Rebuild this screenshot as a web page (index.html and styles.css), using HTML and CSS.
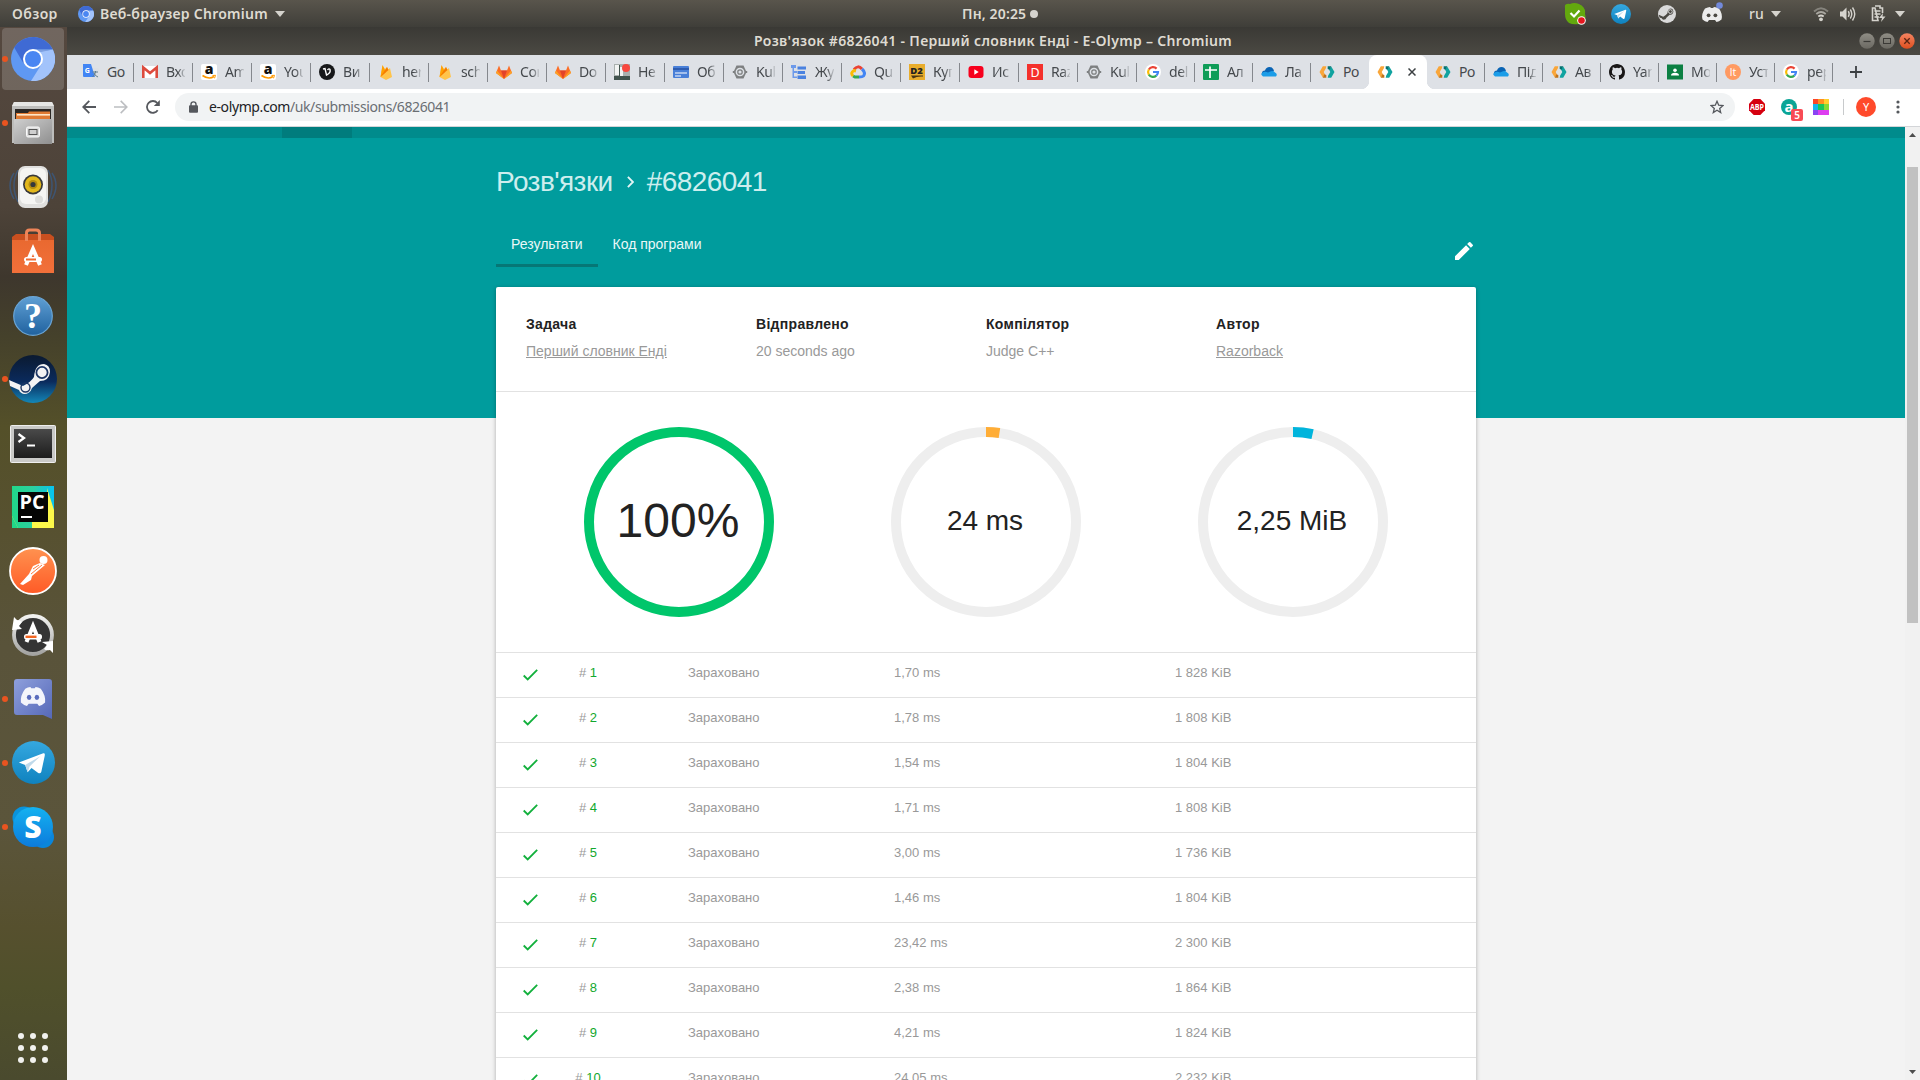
FILE: index.html
```html
<!DOCTYPE html>
<html lang="uk">
<head>
<meta charset="utf-8">
<title>Розв'язок #6826041</title>
<link rel="stylesheet" href="styles.css">
</head>
<body>
<svg class="defs" width="0" height="0" aria-hidden="true">
  <defs>
    <linearGradient id="gTele" x1="0" y1="0" x2="0" y2="1"><stop offset="0" stop-color="#35a8e0"/><stop offset="1" stop-color="#0f82bf"/></linearGradient>
    <linearGradient id="gSteam" x1="0" y1="0" x2="0" y2="1"><stop offset="0" stop-color="#0b1a30"/><stop offset=".55" stop-color="#0a2a5c"/><stop offset="1" stop-color="#1387b8"/></linearGradient>
    <linearGradient id="gPost" x1="0" y1="0" x2="0" y2="1"><stop offset="0" stop-color="#ff9250"/><stop offset="1" stop-color="#ff5a26"/></linearGradient>
    <linearGradient id="gHelp" x1="0" y1="0" x2="0" y2="1"><stop offset="0" stop-color="#5f9fd4"/><stop offset="1" stop-color="#20629f"/></linearGradient>
    <linearGradient id="gMetal" x1="0" y1="0" x2="0" y2="1"><stop offset="0" stop-color="#f2f2f0"/><stop offset="1" stop-color="#a3a3a1"/></linearGradient>
    <linearGradient id="gCab" x1="0" y1="0" x2="1" y2="1"><stop offset="0" stop-color="#cfcfcf"/><stop offset="1" stop-color="#8f8f8f"/></linearGradient>
    <linearGradient id="gBag" x1="0" y1="0" x2="0" y2="1"><stop offset="0" stop-color="#e8682f"/><stop offset="1" stop-color="#f2703a"/></linearGradient>
    <linearGradient id="gTerm" x1="0" y1="0" x2="0" y2="1"><stop offset="0" stop-color="#4a4a4a"/><stop offset="1" stop-color="#1c1c1c"/></linearGradient>
    <linearGradient id="gPc" x1="0" y1="0" x2="1" y2="0"><stop offset="0" stop-color="#21d789"/><stop offset=".5" stop-color="#2ccfa0"/><stop offset="1" stop-color="#07c3f2"/></linearGradient>
    <linearGradient id="gDisc" x1="0" y1="0" x2="1" y2="1"><stop offset="0" stop-color="#8e9fdc"/><stop offset="1" stop-color="#5568b8"/></linearGradient>
    <linearGradient id="gSkype" x1="0" y1="0" x2="0" y2="1"><stop offset="0" stop-color="#14b2f0"/><stop offset="1" stop-color="#0c7bdc"/></linearGradient>
    <linearGradient id="gClose" x1="0" y1="0" x2="0" y2="1"><stop offset="0" stop-color="#f58461"/><stop offset="1" stop-color="#df4f1f"/></linearGradient>
    <linearGradient id="gWin" x1="0" y1="0" x2="0" y2="1"><stop offset="0" stop-color="#8f8d85"/><stop offset="1" stop-color="#6b6962"/></linearGradient>

    <symbol id="chromium" viewBox="0 0 44 44">
      <circle cx="22" cy="22" r="22" fill="#5f98f3"/>
      <path d="M3.2 10.6A22 22 0 0 1 41.8 12.500H22L12.600 26.500Z" fill="#3f6ad4"/>
      <path d="M41.800 12.500A22 22 0 0 1 20 44L31 26.500L29 14.500Z" fill="#a2c3fb"/>
      <path d="M22 12.500H41.800L30 15Z" fill="#7d9fe0"/>
      <circle cx="22" cy="22" r="10" fill="#fff"/><circle cx="22" cy="22" r="8" fill="#4a86f2"/>
    </symbol>
    <symbol id="telegram" viewBox="0 0 44 44">
      <circle cx="22" cy="22" r="22" fill="url(#gTele)"/>
      <path d="M7 22L32 12.500Q34 12 33.500 15L30 31.500Q29 34 26.500 32.500L20 27.500L16 32L13.500 24.500Z" fill="#fff"/>
      <path d="M13.500 24.500L29 15.500L18 26L16 32Z" fill="#bfd9ea"/>
    </symbol>
    <symbol id="discordface" viewBox="0 0 30 22">
      <path d="M6 2Q9 .3 12 0L13 1.500H17L18 0Q21 .3 24 2Q30 10 29 18Q26 21 22 22L20 19.500H10L8 22Q4 21 1 18Q0 10 6 2Z" fill="#f4f5fb"/>
      <ellipse cx="10.500" cy="12" rx="2.600" ry="3" fill="#5a6cbd"/><ellipse cx="19.500" cy="12" rx="2.600" ry="3" fill="#5a6cbd"/>
    </symbol>
    <symbol id="olymp" viewBox="0 0 16 16">
      <path d="M3.800 2.300H7.300L6.800 4.500L4.700 8L6 10.500L3.800 13.400L.5 8Z" fill="#f9a63a"/>
      <path d="M3.800 13.400L5.400 10.200L7.300 11V13.700H4Z" fill="#c1731a"/>
      <path d="M12.200 13.700H8.700L9.200 11.500L11.300 8L10 5.500L12.200 2.600L15.500 8Z" fill="#10a3a0"/>
      <path d="M12.200 2.600L10.600 5.800L8.700 5V2.300H12Z" fill="#05716f"/>
    </symbol>
    <symbol id="amazon" viewBox="0 0 16 16">
      <rect width="16" height="16" rx="2" fill="#fff"/>
      <text x="8" y="10" text-anchor="middle" font-family="Open Sans" font-weight="800" font-size="14" fill="#111">a</text>
      <path d="M1.500 11.500Q8 16 13 12.500" stroke="#f90" stroke-width="1.600" fill="none"/><path d="M11.500 11.500L14.500 11.300L13.500 14.300" stroke="#f90" fill="none"/>
    </symbol>
    <symbol id="firebase" viewBox="0 0 16 16">
      <path d="M2.500 13L4.500 1.500L7 5L9 3L10.200 5.500L12 4L14 13L8 16Z" fill="#ffc44a"/>
      <path d="M2.500 13L4.500 1L8 8Z" fill="#ffa000"/><path d="M2.500 13L9 3L10.500 6Z" fill="#f57c00"/>
    </symbol>
    <symbol id="gitlab" viewBox="0 0 16 16">
      <path d="M8 15L0 9L3 1.500L5 6.500H11L13 1.500L16 9Z" fill="#fc6d26"/><path d="M8 15L5 6.500H11Z" fill="#e24329"/><path d="M8 15L0 9L1 6.500ZM8 15L16 9L15 6.500Z" fill="#fca326"/>
    </symbol>
    <symbol id="kube" viewBox="0 0 16 16">
      <path d="M4.500 1.500H11.500L14.500 8L11.500 14.500H4.500L1.500 8Z" fill="#7e8081"/><circle cx="8" cy="8" r="3.600" fill="none" stroke="#dee1e6" stroke-width="1.500"/><circle cx="8" cy="8" r="1.600" fill="#dee1e6"/><path d="M.8 8H3M13 8H15.200" stroke="#7e8081" stroke-width="2"/>
    </symbol>
    <symbol id="google" viewBox="0 0 16 16">
      <circle cx="8" cy="8" r="8" fill="#fff"/>
      <g fill="none" stroke-width="2.200"><path d="M11.600 4.600A5 5 0 0 0 3.800 5.500" stroke="#ea4335"/><path d="M3.800 5.500A5 5 0 0 0 3.800 10.600" stroke="#fbbc05"/><path d="M3.800 10.600A5 5 0 0 0 11.300 11.700" stroke="#34a853"/><path d="M11.300 11.700A5 5 0 0 0 13 8H8" stroke="#4285f4"/></g>
    </symbol>
    <symbol id="onedrive" viewBox="0 0 16 16">
      <path d="M1 9Q1 6.500 4 6.500Q5 3 8.500 3Q12 3 13 7L8 11H2Q0 11 1 9Z" fill="#0a64b4"/><path d="M2 12.500Q-1 10.500 1.500 8.500Q4 6.800 7 8.500L10 7.200Q13 6.600 14 8.600Q17 10 15 12.500Z" fill="#1b9de8"/>
    </symbol>
    <symbol id="caret" viewBox="0 0 10 6"><path d="M0 0H10L5 6Z" fill="#d5d3cd"/></symbol>
    <symbol id="check" viewBox="0 0 15 12"><path d="M.7 6.500L4.700 10.500L14.200 .9" fill="none" stroke="#12b03c" stroke-width="1.800"/></symbol>
    <symbol id="steamarm" viewBox="0 0 48 48">
      <path d="M0 25L14 31Q22 27 25 22Q26 9 35 9Q41 10 41 17Q40 26 31 26L23 33Q21 39 15 39Q11 38 10 35L1 31Z" fill="#f3f3f3"/>
      <circle cx="33" cy="17.500" r="5.600" fill="#f3f3f3" stroke="#1c3564" stroke-width="1.800"/><circle cx="16.500" cy="32.500" r="4.500" fill="none" stroke="#1c3564" stroke-width="1.400"/>
    </symbol>
  </defs>
</svg>

<header class="panel">
  <span class="activities">Обзор</span>
  <svg class="panel-app-icon"><use href="#chromium"/></svg>
  <span class="panel-app">Веб-браузер Chromium</span>
  <svg class="caret"><use href="#caret"/></svg>
  <span class="clock">Пн, 20:25</span>
  <i class="clock-dot"></i>
  <div class="tray">
    <svg class="t-skype" viewBox="0 0 22 22"><path d="M1 5Q0 0 6 1Q10-1 15 1Q22 4 21 11Q22 14 21 17Q20 22 15 21Q9 22 5 20Q1 17 1 11Z" fill="#63a80e"/><path d="M6.500 10L10 13.500L15.500 7.500" stroke="#fff" stroke-width="2.200" fill="none"/><circle cx="17.500" cy="17.500" r="4.300" fill="#fff"/><circle cx="17.500" cy="17.500" r="3.300" fill="#e5171f"/></svg>
    <svg class="t-telegram"><use href="#telegram"/></svg>
    <svg class="t-steam" viewBox="0 0 48 48"><circle cx="24" cy="24" r="24" fill="#dadada"/><path d="M2 26L14 31Q22 27 25 22Q26 9 35 9Q41 10 41 17Q40 26 31 26L23 33Q21 39 15 39Q11 38 10 35L4 33Z" fill="#4b4943"/><circle cx="33" cy="17.500" r="5" fill="#4b4943" stroke="#dadada" stroke-width="2.500"/></svg>
    <svg class="t-discord" viewBox="0 0 22 22"><path d="M4 7.500Q7 6 9 6L10 7H12L13 6Q16 6 18 7.500Q22 13 20.500 18.500Q18 20.500 15.500 21L14 19H8L6.500 21Q4 20.500 1.500 18.500Q0 13 4 7.500Z" fill="#ececec"/><circle cx="7.600" cy="14.300" r="1.900" fill="#4b4943"/><circle cx="14.400" cy="14.300" r="1.900" fill="#4b4943"/><circle cx="18.500" cy="4.500" r="3.300" fill="#7289da"/></svg>
    <span class="lang">ru</span>
    <svg class="caret"><use href="#caret"/></svg>
    <svg class="t-wifi" viewBox="0 0 16 16"><g fill="none" stroke-width="1.800"><path d="M1 5.500Q8 -1 15 5.500" stroke="#85837c"/><path d="M3.300 8Q8 4 12.700 8" stroke="#a9a7a0"/><path d="M5.300 10.500Q8 8.500 10.700 10.500" stroke="#d5d3cd"/></g><circle cx="8" cy="13.300" r="1.900" fill="#d5d3cd"/></svg>
    <svg class="t-vol" viewBox="0 0 16 16"><path d="M0 5.500H2.500L6.500 1.500V14.500L2.500 10.500H0Z" fill="#d5d3cd"/><g fill="none" stroke="#d5d3cd" stroke-width="1.400"><path d="M8.300 5.200Q10 8 8.300 10.800"/><path d="M10.300 3.500Q13.200 8 10.300 12.500"/><path d="M12.500 1.500Q17 8 12.500 14.500"/></g></svg>
    <svg class="t-bat" viewBox="0 0 16 17"><path d="M4 1H9V3H11.500V8M7 15.500H1.500V3H4Z" fill="none" stroke="#d5d3cd" stroke-width="1.600"/><path d="M3.500 6H9.500M3.500 9H9.500M3.500 12H8" stroke="#d5d3cd" stroke-width="1.500"/><path d="M12 8L8 13H11L10 17L14.500 11.500H11.500Z" fill="#d5d3cd"/></svg>
    <svg class="caret"><use href="#caret"/></svg>
  </div>
</header>

<div class="desktop">
<aside class="dock">
  <div class="app focused running"><svg width="44" height="44"><use href="#chromium"/></svg></div>
  <div class="app running"><svg width="44" height="44" viewBox="0 0 44 44"><path d="M3 1H41L43 5V42H1V5Z" fill="#bdbdbb"/><path d="M3 1H41L43 5H1Z" fill="#e6e6e4"/><rect x="4" y="8" width="36" height="15" fill="#2b2724"/><path d="M5 12H17L18 10.500H39V18H5Z" fill="#e07a33"/><rect x="6" y="13" width="33" height="1.600" fill="#ffe6c8"/><path d="M3 18H41V43H3Z" fill="url(#gCab)"/><rect x="15.500" y="26" width="13" height="10" rx="1.500" fill="#dedede" stroke="#fafafa"/><rect x="18" y="28.500" width="8" height="5" fill="#cfcfcf" stroke="#555"/></svg></div>
  <div class="app"><svg width="50" height="44" viewBox="0 0 50 44"><g fill="none" stroke="#3e5572" stroke-width="1.500"><path d="M6 8Q-2 20 6 34M10 5Q2 20 10 37M44 8Q52 20 44 34M40 5Q48 20 40 37"/></g><rect x="10" y="1" width="30" height="42" rx="7" fill="#e0e0de"/><rect x="12" y="3" width="26" height="36" rx="6" fill="#f5f5f3"/><circle cx="25" cy="19.500" r="10" fill="#39393a"/><circle cx="25" cy="19.500" r="8.300" fill="#e2b71b"/><circle cx="25" cy="19.500" r="4.500" fill="#b58d10"/><circle cx="25" cy="19.500" r="2.600" fill="#35383c"/><circle cx="31" cy="34.500" r="4" fill="#dcdcda"/></svg></div>
  <div class="app"><svg width="44" height="46" viewBox="0 0 44 46"><path d="M1 9H43V45H1Z" fill="url(#gBag)"/><path d="M1 9L5 6H39L43 9V12H1Z" fill="#c94f1f"/><path d="M15.500 13V5Q15.500 2 18.500 2H25Q28.500 2 28.500 5V13" fill="none" stroke="#ee8458" stroke-width="3"/><path d="M15 37L22 21L29 37" fill="none" stroke="#fff" stroke-width="4"/><rect x="13" y="29" width="18" height="5" rx="2.500" fill="#fff"/><rect x="15" y="30.500" width="10" height="2" fill="#ef6c35"/></svg></div>
  <div class="app low"><svg width="40" height="42" viewBox="0 0 40 42"><circle cx="20" cy="21" r="19.300" fill="url(#gHelp)" stroke="#6aa5d5" stroke-width="1.200"/><text x="20" y="33" text-anchor="middle" font-family="Liberation Serif" font-weight="700" font-size="36" fill="#fff">?</text></svg></div>
  <div class="app running"><svg width="48" height="48" viewBox="0 0 48 48"><circle cx="24" cy="24" r="24" fill="url(#gSteam)"/><use href="#steamarm"/></svg></div>
  <div class="app low"><svg width="46" height="38" viewBox="0 0 46 38"><rect x=".5" y=".5" width="45" height="37" rx="1" fill="#c9c9c7" stroke="#efefef"/><rect x="4" y="4" width="38" height="29" fill="url(#gTerm)"/><path d="M8.500 9L14 13L8.500 17" stroke="#fff" stroke-width="2.300" fill="none"/><path d="M17 20.500H25" stroke="#fff" stroke-width="2"/></svg></div>
  <div class="app"><svg width="42" height="42" viewBox="0 0 42 42"><rect width="42" height="42" fill="url(#gPc)"/><path d="M35 2L42 24V42H6L0 30V42L20 42V30L36 20Z" fill="#fcf84a"/><path d="M0 30L6 42H0Z" fill="#21d789"/><rect x="6" y="6" width="30" height="30" fill="#050505"/><text x="7.500" y="22.500" font-family="Open Sans" font-weight="700" font-size="19" textLength="25" lengthAdjust="spacingAndGlyphs" fill="#fff">PC</text><rect x="9" y="30" width="11" height="2" fill="#fff"/></svg></div>
  <div class="app"><svg width="48" height="48" viewBox="0 0 48 48"><circle cx="24" cy="24" r="23" fill="url(#gPost)" stroke="#fff" stroke-width="1.800"/><circle cx="34.500" cy="13" r="4" fill="#fff"/><path d="M31 16L36 18L23 29L22 33L14 38L11 37L20 27L24 19Z" fill="#fff"/><path d="M22 27L33 18M24 22L30 18" stroke="#ff7a3d"/></svg></div>
  <div class="app"><svg width="44" height="44" viewBox="0 0 44 44"><circle cx="22" cy="22" r="19" fill="#343434" stroke="url(#gMetal)" stroke-width="3.800"/><path d="M3 4L6 7Q9 7 11 9L8 13L11 16L1 17ZM42 40L39 37Q35 38 33 36L36 32L31 29L42 28Z" fill="#fff"/><path d="M15.500 29L22 13L28.500 29" fill="none" stroke="#fff" stroke-width="4"/><rect x="13" y="21" width="18" height="5.500" rx="2.500" fill="#fff"/><rect x="14.500" y="22.600" width="11" height="2.400" fill="#f26522"/></svg></div>
  <div class="app running"><svg width="38" height="42" viewBox="0 0 38 42"><path d="M3 1H35Q38 1 38 4V41L29 37H3Q0 37 0 34V4Q0 1 3 1Z" fill="url(#gDisc)"/><use href="#discordface" x="4" y="9" width="30" height="19"/></svg></div>
  <div class="app high running"><svg width="43" height="43"><use href="#telegram"/></svg></div>
  <div class="app running"><svg width="42" height="42" viewBox="0 0 42 42"><circle cx="12" cy="12" r="11.500" fill="#0a93dc"/><circle cx="31" cy="31" r="11" fill="#0a86dc"/><circle cx="21" cy="21" r="20" fill="url(#gSkype)"/><text x="21" y="32" text-anchor="middle" font-family="Open Sans" font-weight="800" font-size="30" fill="#fff">S</text></svg></div>
  <svg class="apps-grid" width="30" height="30" viewBox="0 0 30 30" fill="#f1f1ee"><circle cx="3" cy="3" r="3"/><circle cx="15" cy="3" r="3"/><circle cx="27" cy="3" r="3"/><circle cx="3" cy="15" r="3"/><circle cx="15" cy="15" r="3"/><circle cx="27" cy="15" r="3"/><circle cx="3" cy="27" r="3"/><circle cx="15" cy="27" r="3"/><circle cx="27" cy="27" r="3"/></svg>
</aside>

<div class="window">
  <div class="titlebar">
    <span class="title">Розв'язок #6826041 - Перший словник Енді - E-Olymp – Chromium</span>
    <div class="win-buttons">
      <svg width="16" height="16" viewBox="0 0 16 16"><circle cx="8" cy="8" r="7.700" fill="url(#gWin)"/><path d="M4.500 8.500H11.500" stroke="#3b3a36" stroke-width="1.200"/></svg>
      <svg width="16" height="16" viewBox="0 0 16 16"><circle cx="8" cy="8" r="7.700" fill="url(#gWin)"/><rect x="4.500" y="5.500" width="7" height="5" fill="none" stroke="#3b3a36"/></svg>
      <svg width="16" height="16" viewBox="0 0 16 16"><circle cx="8" cy="8" r="7.700" fill="url(#gClose)"/><path d="M5.300 5.300L10.700 10.700M10.700 5.300L5.300 10.700" stroke="#5a2412" stroke-width="1.300"/></svg>
    </div>
  </div>

  <nav class="tabs">
    <div class="tab"><svg viewBox="0 0 16 16"><path d="M7 4H15Q16 4 16 5V15Q16 16 15 16H9Z" fill="#dcdfe3"/><path d="M0 0H8L12 13H1Q0 13 0 12Z" fill="#4285f4"/><text x="1.800" y="8.800" font-family="Open Sans" font-weight="700" font-size="7" fill="#fff">G</text><path d="M9.500 8H15M12.500 7V8Q12 11 9.500 13M11 9Q12 12 15 13" stroke="#607d8b" fill="none"/></svg><span class="whole">Go</span></div>
    <div class="tab"><svg viewBox="0 0 16 16"><rect y="2" width="16" height="12" fill="#fff"/><path d="M1.300 14V3.500L8 9L14.700 3.500V14" fill="none" stroke="#dd4b3e" stroke-width="2.600"/></svg><span>Вхо</span></div>
    <div class="tab"><svg><use href="#amazon"/></svg><span>Am</span></div>
    <div class="tab"><svg><use href="#amazon"/></svg><span>You</span></div>
    <div class="tab"><svg viewBox="0 0 16 16"><circle cx="8" cy="8" r="8" fill="#17181a"/><path d="M4 5L6 4.500L7.500 11Q12 9 11 5.500Q10 4 8.500 6" fill="none" stroke="#fff" stroke-width="1.400"/></svg><span>Ви</span></div>
    <div class="tab"><svg><use href="#firebase"/></svg><span>her</span></div>
    <div class="tab"><svg><use href="#firebase"/></svg><span>sch</span></div>
    <div class="tab"><svg><use href="#gitlab"/></svg><span>Con</span></div>
    <div class="tab"><svg><use href="#gitlab"/></svg><span>Do</span></div>
    <div class="tab"><svg viewBox="0 0 16 16"><rect width="16" height="16" fill="#a9b0ae"/><path d="M1 1H5V11H1ZM6 3H9V12H6Z" fill="#f2f4f3"/><path d="M5 1H6V12H5ZM0 12H16V16H0Z" fill="#41534d"/><circle cx="12" cy="4" r="4" fill="#f8483f"/></svg><span>Не</span></div>
    <div class="tab"><svg viewBox="0 0 16 16"><rect y="2" width="16" height="12" rx="1" fill="#4a80d8"/><path d="M0 5H16" stroke="#2e5cb0" stroke-width="2"/><path d="M2 9H14M2 12H8" stroke="#fff" stroke-width="1.200"/></svg><span>Об</span></div>
    <div class="tab"><svg><use href="#kube"/></svg><span>Kub</span></div>
    <div class="tab"><svg viewBox="0 0 16 16"><path d="M0 1H5V4H3V7H6V9H3V12.500H6V14H1.500V4H0Z" fill="#6d9aea"/><path d="M6.500 2.500H15V5.500H6.500ZM6.500 7H14V10H6.500ZM6.500 11.500H15V15H6.500Z" fill="#4a82e0"/></svg><span>Жу</span></div>
    <div class="tab"><svg viewBox="0 0 16 16" fill="none" stroke-width="3"><path d="M4 5.500Q8 .5 12 5" stroke="#ea4335"/><path d="M12 5Q16 8.500 13.500 12Q12.500 13 9 13" stroke="#4285f4"/><path d="M9 13H5L3 12" stroke="#34a853"/><path d="M3 12Q0 9 4 6.500L6 7" stroke="#fbbc05"/></svg><span>Qu</span></div>
    <div class="tab"><svg viewBox="0 0 16 16"><rect width="16" height="16" fill="#e9ad2c"/><text x="1.300" y="9.500" font-family="Open Sans" font-weight="800" font-size="9.500" fill="#222">D2</text><path d="M2 11.500H14V12.500Q8 12 4 14.500Z" fill="#473414"/></svg><span>Куп</span></div>
    <div class="tab"><svg viewBox="0 0 16 16"><rect x=".5" y="2" width="15" height="12" rx="3" fill="#f7001d"/><path d="M6.300 5.300V10.700L10.700 8Z" fill="#fff"/></svg><span>Ис</span></div>
    <div class="tab"><svg viewBox="0 0 16 16"><rect width="16" height="16" fill="#f4312c"/><text x="8" y="12.500" text-anchor="middle" font-family="Noto Sans" font-size="12.500" fill="#fff">D</text></svg><span>Raz</span></div>
    <div class="tab"><svg><use href="#kube"/></svg><span>Kub</span></div>
    <div class="tab narrow"><svg><use href="#google"/></svg><span>del</span></div>
    <div class="tab narrow"><svg viewBox="0 0 16 16"><rect width="16" height="16" rx="1" fill="#0f9d58"/><path d="M2 6H14M7 2.500V14" stroke="#fff" stroke-width="1.700"/></svg><span>Ал</span></div>
    <div class="tab narrow"><svg><use href="#onedrive"/></svg><span>Ла</span></div>
    <div class="tab narrow bare"><svg><use href="#olymp"/></svg><span class="whole">Ро</span></div>
    <div class="tab narrow active"><svg><use href="#olymp"/></svg><svg class="close" viewBox="0 0 8 8"><path d="M.5 .5L7.500 7.500M7.500 .5L.5 7.500" stroke="#3c4043" stroke-width="1.500"/></svg></div>
    <div class="tab narrow"><svg><use href="#olymp"/></svg><span class="whole">Ро</span></div>
    <div class="tab narrow"><svg><use href="#onedrive"/></svg><span>Під</span></div>
    <div class="tab narrow"><svg><use href="#olymp"/></svg><span>Ав</span></div>
    <div class="tab narrow"><svg viewBox="0 0 16 16"><path fill="#191717" d="M8 0C3.580 0 0 3.580 0 8c0 3.540 2.290 6.530 5.470 7.590.4.070.55-.17.55-.38 0-.19-.01-.82-.01-1.490-2.010.37-2.530-.49-2.690-.94-.09-.23-.48-.94-.82-1.130-.28-.15-.68-.52-.01-.53.63-.01 1.080.58 1.230.82.72 1.210 1.870.87 2.330.66.070-.52.28-.87.51-1.070-1.780-.2-3.640-.89-3.640-3.950 0-.87.31-1.590.82-2.150-.08-.2-.36-1.020.08-2.120 0 0 .67-.21 2.200.82a7.600 7.600 0 0 1 4 0c1.530-1.040 2.200-.82 2.200-.82.44 1.100.16 1.920.08 2.120.51.56.82 1.270.82 2.150 0 3.070-1.870 3.750-3.650 3.950.29.25.54.73.54 1.480 0 1.070-.01 1.930-.01 2.200 0 .21.15.46.55.38A8 8 0 0 0 16 8c0-4.420-3.580-8-8-8z"/></svg><span>Yan</span></div>
    <div class="tab narrow"><svg viewBox="0 0 16 16"><rect y=".5" width="16" height="15" fill="#0c8043"/><circle cx="8" cy="6.300" r="1.800" fill="#fff"/><path d="M4 11.500Q4 8.800 8 8.800Q12 8.800 12 11.500Z" fill="#fff"/></svg><span>Мо</span></div>
    <div class="tab narrow"><svg viewBox="0 0 16 16"><circle cx="8" cy="8" r="8" fill="#ff9a62"/><text x="8" y="12" text-anchor="middle" font-family="Noto Sans" font-size="10.500" fill="#fff">lt</text></svg><span>Уст</span></div>
    <div class="tab narrow"><svg><use href="#google"/></svg><span>pep</span></div>
    <svg class="new-tab" viewBox="0 0 12 12"><path d="M6 0V12M0 6H12" stroke="#3c4043" stroke-width="1.800"/></svg>
  </nav>

  <div class="toolbar">
    <svg class="nav-icon" viewBox="0 0 14 14"><path d="M14 7H1.500M7.300 .9L1.200 7L7.300 13.100" fill="none" stroke="#55585d" stroke-width="1.800"/></svg>
    <svg class="nav-icon" viewBox="0 0 14 14"><path d="M0 7H12.500M6.700 .9L12.800 7L6.700 13.100" fill="none" stroke="#bcbec1" stroke-width="1.600"/></svg>
    <svg class="nav-icon" viewBox="0 0 14 14"><path d="M11.700 10.300A5.900 5.900 0 1 1 11.300 3" fill="none" stroke="#55585d" stroke-width="1.800"/><path d="M13.800 0V6H7.800Z" fill="#55585d"/></svg>
    <div class="omnibox">
      <svg class="lock" viewBox="0 0 9 12"><path d="M2 5V3.200Q2 .9 4.500 .9Q7 .9 7 3.200V5" fill="none" stroke="#55585d" stroke-width="1.400"/><rect y="4.300" width="9" height="7.500" rx="1" fill="#55585d"/></svg>
      <span class="url"><b>e-olymp.com</b>/uk/submissions/6826041</span>
      <svg class="star" viewBox="0 0 14 14"><path d="M7 1.300L8.700 5.200L13 5.600L9.700 8.400L10.700 12.600L7 10.300L3.300 12.600L4.300 8.400L1 5.600L5.300 5.200Z" fill="none" stroke="#55585d" stroke-width="1.300"/></svg>
    </div>
    <div class="extensions">
      <svg width="16" height="16" viewBox="0 0 16 16"><path d="M4.700 0H11.300L16 4.700V11.300L11.300 16H4.700L0 11.300V4.700Z" fill="#d5000f"/><text x="1" y="11" font-family="Open Sans" font-weight="700" font-size="8.500" textLength="14" lengthAdjust="spacingAndGlyphs" fill="#fff">ABP</text></svg>
      <div class="badge-wrap"><svg width="16" height="16" viewBox="0 0 16 16"><circle cx="8" cy="8" r="8" fill="#0aa596"/><text x="8" y="12.500" text-anchor="middle" font-family="Open Sans" font-weight="700" font-size="15" fill="#fff">a</text></svg><span class="badge">5</span></div>
      <svg width="16" height="16" viewBox="0 0 16 16"><path fill="#fc4527" d="M0 0H5V5H0Z"/><path fill="#ff9020" d="M5 0H11V5H5Z"/><path fill="#ffd02c" d="M11 0H16V5H11Z"/><path fill="#13b6ec" d="M0 5H5V11H0Z"/><path fill="#17c55c" d="M5 5H11V11H5Z"/><path fill="#84da35" d="M11 5H16V11H11Z"/><path fill="#8a44f2" d="M0 11H5V16H0Z"/><path fill="#dd3df0" d="M5 11H16V16H5Z"/></svg>
      <i class="divider"></i>
      <span class="avatar">Y</span>
      <svg class="kebab" width="4" height="14" viewBox="0 0 4 14" fill="#55585d"><circle cx="2" cy="2" r="1.600"/><circle cx="2" cy="7" r="1.600"/><circle cx="2" cy="12" r="1.600"/></svg>
    </div>
  </div>

  <div class="viewport">
    <main class="page">
      <div class="site-nav"><i class="site-nav-item"></i></div>
      <div class="content">
        <h1 class="crumbs"><span>Розв'язки</span><svg width="7" height="12" viewBox="0 0 7 12"><path d="M.9 .9L6 6L.9 11.100" fill="none" stroke="#e3f5f5" stroke-width="1.900"/></svg><span>#6826041</span></h1>
        <div class="page-tabs">
          <a class="page-tab selected">Результати</a>
          <a class="page-tab">Код програми</a>
          <svg class="edit" width="24" height="24" viewBox="0 0 24 24"><path fill="#fff" d="M3 17.250V21h3.750L17.810 9.940l-3.750-3.750L3 17.250zM20.710 7.040a1 1 0 0 0 0-1.410l-2.340-2.340a1 1 0 0 0-1.410 0l-1.830 1.830 3.750 3.750 1.830-1.830z"/></svg>
        </div>
        <section class="card">
          <dl class="facts">
            <div><dt>Задача</dt><dd><a>Перший словник Енді</a></dd></div>
            <div><dt>Відправлено</dt><dd>20 seconds ago</dd></div>
            <div><dt>Компілятор</dt><dd>Judge C++</dd></div>
            <div><dt>Автор</dt><dd><a>Razorback</a></dd></div>
          </dl>
          <div class="gauges">
            <div class="gauge big"><svg viewBox="0 0 190 190"><circle cx="95" cy="95" r="90" stroke="#00c66b"/></svg><span>100%</span></div>
            <div class="gauge"><svg viewBox="0 0 190 190"><circle cx="95" cy="95" r="90" stroke="#eee"/><circle cx="95" cy="95" r="90" stroke="#ffad36" pathLength="100" stroke-dasharray="2.400 100" transform="rotate(-90 95 95)"/></svg><span>24 ms</span></div>
            <div class="gauge"><svg viewBox="0 0 190 190"><circle cx="95" cy="95" r="90" stroke="#eee"/><circle cx="95" cy="95" r="90" stroke="#00b4dc" pathLength="100" stroke-dasharray="3.500 100" transform="rotate(-90 95 95)"/></svg><span>2,25 MiB</span></div>
          </div>
          <div class="results">
            <div class="row"><svg><use href="#check"/></svg><span class="num"># <b>1</b></span><span>Зараховано</span><span>1,70 ms</span><span>1 828 KiB</span></div>
            <div class="row"><svg><use href="#check"/></svg><span class="num"># <b>2</b></span><span>Зараховано</span><span>1,78 ms</span><span>1 808 KiB</span></div>
            <div class="row"><svg><use href="#check"/></svg><span class="num"># <b>3</b></span><span>Зараховано</span><span>1,54 ms</span><span>1 804 KiB</span></div>
            <div class="row"><svg><use href="#check"/></svg><span class="num"># <b>4</b></span><span>Зараховано</span><span>1,71 ms</span><span>1 808 KiB</span></div>
            <div class="row"><svg><use href="#check"/></svg><span class="num"># <b>5</b></span><span>Зараховано</span><span>3,00 ms</span><span>1 736 KiB</span></div>
            <div class="row"><svg><use href="#check"/></svg><span class="num"># <b>6</b></span><span>Зараховано</span><span>1,46 ms</span><span>1 804 KiB</span></div>
            <div class="row"><svg><use href="#check"/></svg><span class="num"># <b>7</b></span><span>Зараховано</span><span>23,42 ms</span><span>2 300 KiB</span></div>
            <div class="row"><svg><use href="#check"/></svg><span class="num"># <b>8</b></span><span>Зараховано</span><span>2,38 ms</span><span>1 864 KiB</span></div>
            <div class="row"><svg><use href="#check"/></svg><span class="num"># <b>9</b></span><span>Зараховано</span><span>4,21 ms</span><span>1 824 KiB</span></div>
            <div class="row"><svg><use href="#check"/></svg><span class="num"># <b>10</b></span><span>Зараховано</span><span>24,05 ms</span><span>2 232 KiB</span></div>
          </div>
        </section>
      </div>
    </main>
    <div class="scrollbar">
      <svg width="7" height="4" viewBox="0 0 7 4"><path d="M0 4L3.500 0L7 4Z" fill="#4d4d4d"/></svg>
      <i class="thumb"></i>
      <svg width="7" height="4" viewBox="0 0 7 4"><path d="M0 0L3.500 4L7 0Z" fill="#4d4d4d"/></svg>
    </div>
  </div>
</div>
</div>
</body>
</html>
```

FILE: styles.css
```css
* { box-sizing: border-box; }
body { margin: 0; width: 1920px; height: 1080px; overflow: hidden; display: flex; flex-direction: column; font-family: "Noto Sans", "Open Sans", sans-serif; }
svg { display: block; flex: none; }
.defs { position: absolute; }

/* Desktop panel */
.panel { flex: none; height: 27px; display: flex; align-items: center; background: linear-gradient(#59554c, #3f3e39); color: #dfdbd2; font-weight: 600; font-size: 14px; line-height: 27px; white-space: nowrap; }
.activities { width: 65px; padding-left: 12px; letter-spacing: .4px; }
.panel-app-icon { width: 16px; height: 16px; margin-left: 13px; }
.panel-app { width: 175px; margin-left: 6px; letter-spacing: .25px; }
.caret { width: 10px; height: 6px; }
.clock { width: 64px; margin-left: 677px; letter-spacing: .15px; }
.clock-dot { width: 8px; height: 8px; margin-left: 4px; border-radius: 50%; background: #d5d3cd; }
.tray { margin-left: auto; padding-right: 15px; display: flex; align-items: center; }
.t-skype { width: 22px; height: 22px; }
.t-telegram { width: 20px; height: 20px; margin-left: 25px; }
.t-steam { width: 18px; height: 18px; margin-left: 27px; }
.t-discord { width: 22px; height: 22px; margin-left: 25px; margin-bottom: 4px; }
.lang { width: 14px; margin-left: 26px; font-weight: 500; }
.tray .caret { margin-left: 8px; }
.t-wifi { width: 16px; height: 16px; margin-left: 32px; }
.t-vol { width: 16px; height: 16px; margin-left: 11px; }
.t-bat { width: 16px; height: 17px; margin-left: 15px; }

.desktop { flex: 1; min-height: 0; display: flex; }

/* Dock */
.dock { flex: none; width: 67px; display: flex; flex-direction: column; background: linear-gradient(#55483f 0, #4d4339 180px, #3e372d 250px, #45412b 310px, #545029 400px, #575130 500px, #59533a 620px, #5b553b 800px, #56502e 900px, #50502b 960px, #4a4a2e 100%); }
.app { position: relative; flex: none; height: 64px; margin-right: 1px; display: flex; align-items: center; justify-content: center; }
.app.focused::before { content: ""; position: absolute; inset: 1px 2px; border-radius: 4px; background: rgba(255,255,255,.17); }
.app svg { position: relative; }
.app.low { padding-top: 2px; }
.app.high { padding-bottom: 1px; }
.app.running::after { content: ""; position: absolute; left: 2px; top: 29px; width: 6px; height: 6px; border-radius: 50%; background: #e95420; }
.apps-grid { margin: auto 0 17px 18px; }

/* Browser window */
.window { flex: 1; min-width: 0; display: flex; flex-direction: column; }
.titlebar { flex: none; height: 28px; display: flex; justify-content: flex-end; background: linear-gradient(#3a3935, #4b4943); color: #dfdbd2; }
.title { flex: 1; padding-left: 687px; font-weight: 600; font-size: 14px; line-height: 28px; letter-spacing: .33px; white-space: nowrap; }
.win-buttons { display: flex; align-items: center; gap: 4px; padding-right: 5px; }
.tabs { flex: none; height: 34px; padding-left: 8px; display: flex; align-items: center; background: #dee1e6; }
.tab { position: relative; flex: none; width: 59px; height: 34px; padding-left: 8px; display: flex; align-items: center; }
.tab.narrow { width: 58px; }
.tab svg { width: 16px; height: 16px; }
.tab span { width: 19px; margin-left: 8px; overflow: hidden; white-space: nowrap; font-size: 14px; line-height: 20px; letter-spacing: -.4px; color: #45494d; -webkit-mask-image: linear-gradient(90deg, #000 60%, rgba(0,0,0,.15)); mask-image: linear-gradient(90deg, #000 60%, rgba(0,0,0,.15)); }
.tab span.whole { -webkit-mask-image: none; mask-image: none; }
.tab::after { content: ""; position: absolute; right: 0; top: 8px; width: 1px; height: 19px; background: #85888d; }
.tab.bare::after, .tab.active::after { display: none; }
.tab.active { background: #fff; border-radius: 8px 8px 0 0; }
.tab.active::before { content: ""; position: absolute; left: -8px; right: -8px; bottom: 0; height: 8px; background: radial-gradient(circle at 0 0, transparent 8px, #fff 8.500px) 0 0 / 8px 8px no-repeat, radial-gradient(circle at 100% 0, transparent 8px, #fff 8.500px) 100% 0 / 8px 8px no-repeat; }
.tab .close { width: 8px; height: 8px; margin-left: 15px; }
.new-tab { width: 12px; height: 12px; margin-left: 17px; }

.toolbar { flex: none; height: 38px; display: flex; align-items: center; padding: 0 0 1px 15px; background: #fff; border-bottom: 1px solid #d3d5d8; }
.nav-icon { width: 14px; height: 14px; margin-right: 18px; }
.omnibox { width: 1560px; height: 28px; margin-left: -3px; padding: 0 11px 0 14px; border-radius: 14px; background: #f1f3f4; display: flex; align-items: center; }
.lock { width: 9px; height: 12px; }
.url { flex: 1; margin-left: 11px; font-size: 14px; line-height: 28px; letter-spacing: -.4px; color: #6a6e73; }
.url b { font-weight: 400; color: #202124; }
.star { width: 14px; height: 14px; }
.extensions { display: flex; align-items: center; margin-left: 14px; }
.extensions > * + * { margin-left: 16px; }
.badge-wrap { position: relative; }
.badge { position: absolute; left: 10px; top: 10px; width: 12px; height: 12px; border-radius: 2px; background: #f84b55; color: #fff; font-size: 10px; font-weight: 600; line-height: 12px; text-align: center; }
.extensions .divider { width: 1px; height: 16px; margin-left: 14px; background: #c8cacc; }
.extensions .avatar { width: 20px; height: 20px; margin-left: 12px; border-radius: 50%; background: #ff4a2b; color: #fff; font-size: 11px; line-height: 20px; text-align: center; }
.extensions .kebab { margin-left: 20px; }

/* Page */
.viewport { flex: 1; min-height: 0; display: flex; }
.page { flex: 1; min-width: 0; overflow: hidden; background: linear-gradient(#009c9d 291px, #f3f3f3 291px); font-family: "Liberation Sans", Arial, sans-serif; }
.site-nav { height: 11px; padding-left: 215px; background: #008b8c; }
.site-nav-item { display: block; width: 70px; height: 11px; background: #007c7d; }
.content { width: 980px; margin: 0 auto; }
.crumbs { margin: 0; height: 86px; padding-top: 28px; display: flex; font-size: 28px; font-weight: 400; line-height: 32px; letter-spacing: -.55px; color: #cdeeee; }
.crumbs svg { margin: 10px 13px 0 14px; }
.page-tabs { display: flex; height: 43px; margin-bottom: 20px; }
.page-tab { height: 43px; padding: 12px 15px 0; font-size: 14px; line-height: 16px; color: #e9f8f8; border-bottom: 3px solid transparent; white-space: nowrap; }
.page-tab.selected { border-color: #067776; }
.edit { margin: 15px 0 0 auto; }
.card { border-radius: 2px; background: #fff; box-shadow: 0 1px 4px rgba(0,0,0,.3); overflow: hidden; }
.facts { margin: 0; height: 105px; padding: 29px 30px 0; display: grid; grid-template-columns: repeat(4, 230px); border-bottom: 1px solid #e2e2e2; font-size: 14px; line-height: 16px; }
.facts dt { font-weight: 700; color: #222; letter-spacing: .3px; }
.facts dd { margin: 11px 0 0; color: #999; }
.facts a { text-decoration: underline; }
.gauges { height: 260px; padding: 35px 88px 0; display: flex; gap: 117px; }
.gauge { width: 190px; height: 190px; display: grid; place-items: center; font-size: 28px; color: #222; }
.gauge > * { grid-area: 1 / 1; }
.gauge svg { width: 190px; height: 190px; fill: none; stroke-width: 10px; }
.gauge span { padding: 0 2px 2px 0; }
.gauge.big { font-size: 48px; }
.gauge.big span { padding-bottom: 4px; }
.row { height: 45px; padding-left: 27px; border-top: 1px solid #e2e2e2; display: grid; grid-template-columns: 15px 100px 50px 206px 281px 1fr; font-size: 13px; line-height: 15px; color: #999; }
.row span { padding-top: 12px; }
.row svg { width: 15px; height: 12px; margin-top: 16px; }
.row .num { text-align: center; }
.row .num + span { grid-column: 4; }
.row b { font-weight: 400; color: #12a82e; }
.scrollbar { flex: none; width: 15px; display: flex; flex-direction: column; align-items: center; padding: 6px 0; background: #f1f1f1; }
.scrollbar .thumb { width: 11px; height: 456px; margin: 30px 0 auto; background: #c1c1c1; }
```
